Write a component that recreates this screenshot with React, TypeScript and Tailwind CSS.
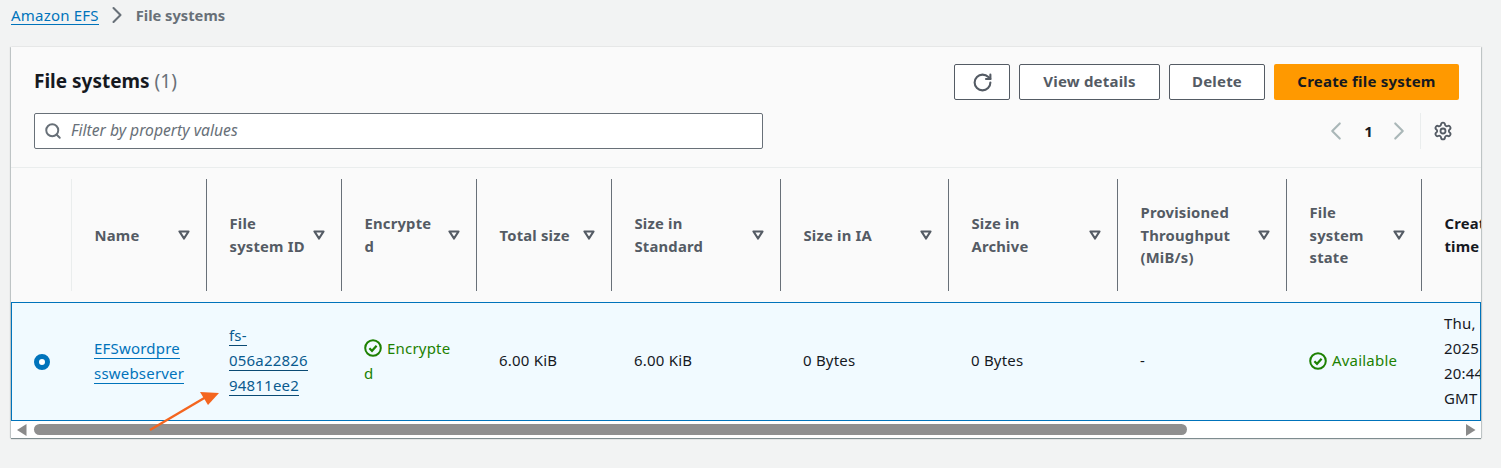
import { RotateCw, Search, ChevronLeft, ChevronRight, Settings } from 'lucide-react';

interface Column {
  label: string[];
  width: string;
  first?: boolean;
}

const columns: Column[] = [
  { label: ['Name'], width: 'w-[135px]', first: true },
  { label: ['File', 'system ID'], width: 'w-[135px]' },
  { label: ['Encrypte', 'd'], width: 'w-[135px]' },
  { label: ['Total size'], width: 'w-[135px]' },
  { label: ['Size in', 'Standard'], width: 'w-[169px]' },
  { label: ['Size in IA'], width: 'w-[168px]' },
  { label: ['Size in', 'Archive'], width: 'w-[169px]' },
  { label: ['Provisioned', 'Throughput', '(MiB/s)'], width: 'w-[169px]' },
  { label: ['File', 'system', 'state'], width: 'w-[135px]' },
];

function SortIcon() {
  return (
    <svg width="12" height="10" viewBox="0 0 12 10" className="shrink-0">
      <path d="M1.500 1.500h9L6 8.500z" fill="none" stroke="#545b64" strokeWidth="2.200" strokeLinejoin="round" />
    </svg>
  );
}

function StatusIcon() {
  return (
    <svg width="18" height="18" viewBox="0 0 18 18" className="shrink-0">
      <circle cx="9" cy="9" r="7.800" fill="none" stroke="#1d8102" strokeWidth="2" />
      <path d="M5.400 9.200l2.600 2.600 4.600-5" fill="none" stroke="#1d8102" strokeWidth="2.200" />
    </svg>
  );
}

function HeaderCell({ column }: { column: Column }) {
  return (
    <div className={`${column.width} shrink-0 h-[112px] flex items-center justify-between pl-[22.500px] pr-[16px] ${column.first ? 'border-l border-[#eaeded]' : 'border-l border-[#687078]'}`}>
      <div className="font-bold text-[14.800px] text-[#545b64] leading-[22.700px]">
        {column.label.map((line) => (
          <div key={line}>{line}</div>
        ))}
      </div>
      <SortIcon />
    </div>
  );
}

function Cell({ width, children }: { width: string; children: React.ReactNode }) {
  return <div className={`${width} shrink-0 pl-[23px] pr-[10px]`}>{children}</div>;
}

function DataLink({ lines, dark, className }: { lines: string[]; dark?: boolean; className?: string }) {
  return (
    <div className={`leading-[25px] ${dark ? 'text-[#0a5a8f]' : 'text-[#0073bb]'} ${className ?? ''}`}>
      {lines.map((line) => (
        <div key={line}>
          <span className={`border-b ${dark ? 'border-[#0a4a74]' : 'border-[#0073bb]'}`}>{line}</span>
        </div>
      ))}
    </div>
  );
}

export default function App() {
  return (
    <div className="h-[468px] overflow-hidden bg-[#f2f3f3] text-[15px] tracking-[0.2px] text-[#16191f] font-['Noto_Sans',sans-serif]">
      <nav className="flex items-center h-[31px] pl-[11px] pb-[1px]">
        <a className="text-[#0073bb] border-b border-[#0073bb] leading-[18px]">Amazon EFS</a>
        <ChevronRight size={28} strokeWidth={1.800} className="text-[#687078] ml-[4px] mr-[5px]" />
        <span className="font-bold text-[14.700px] tracking-normal text-[#687078]">File systems</span>
      </nav>

      <div className="relative ml-[11px] mt-[16px] w-[1470px] h-[391px] bg-white shadow-[0_1px_1px_rgba(0,28,36,0.45),-1px_0_1px_rgba(0,28,36,0.15),1px_0_1px_rgba(0,28,36,0.15)] overflow-hidden">
        <div className="h-[121px] bg-[#fafafa] border-b border-[#eaeded] pl-[23px] pr-[22px] pt-[17px]">
          <div className="flex items-center justify-between h-[36px]">
            <h1 className="text-[19px] tracking-normal font-bold leading-[34px] pb-[2px]">
              File systems <span className="font-normal text-[#687078]">(1)</span>
            </h1>
            <div className="flex items-center font-bold text-[#545b64] leading-[32px]">
              <button className="w-[56px] h-[36px] flex items-center justify-center bg-white border border-[#545b64] rounded-[2px]">
                <RotateCw size={21} strokeWidth={2.400} />
              </button>
              <button className="ml-[9px] w-[141px] h-[36px] bg-white border border-[#545b64] rounded-[2px] pb-[2px]">View details</button>
              <button className="ml-[9px] w-[96px] h-[36px] bg-white border border-[#545b64] rounded-[2px] pb-[2px]">Delete</button>
              <button className="ml-[9px] w-[185px] h-[36px] bg-[#ff9900] text-[#16191f] rounded-[2px] pb-[2px]">Create file system</button>
            </div>
          </div>
          <div className="flex items-center justify-between mt-[13px] h-[36px]">
            <div className="w-[729px] h-[36px] flex items-center bg-white border border-[#687078] rounded-[2px] pl-[9px]">
              <Search size={18} strokeWidth={2.600} className="text-[#687078]" />
              <span className="ml-[9px] italic text-[15.700px] tracking-normal text-[#687078]">Filter by property values</span>
            </div>
            <div className="flex items-center mr-[6px]">
              <ChevronLeft size={30} strokeWidth={1.700} className="text-[#aab7b8]" />
              <span className="ml-[13px] mr-[11px] font-bold">1</span>
              <ChevronRight size={30} strokeWidth={1.700} className="text-[#aab7b8]" />
              <div className="ml-[6px] w-px h-[36px] bg-[#eaeded]" />
              <Settings size={20} strokeWidth={2.200} className="ml-[12px] text-[#545b64]" />
            </div>
          </div>
        </div>

        <div className="flex items-center h-[134px] bg-[#fafafa] pl-[60px] overflow-hidden">
          {columns.map((column) => (
            <HeaderCell key={column.label.join(' ')} column={column} />
          ))}
          <div className="shrink-0 h-[112px] flex items-center border-l border-[#687078] pl-[22.500px] w-[200px] font-bold text-[14.800px] leading-[22.700px]">
            <div>
              <div>Creation</div>
              <div>time</div>
            </div>
          </div>
        </div>

        <div className="flex items-center h-[119px] pb-[2px] bg-[#f1faff] border border-[#0073bb] overflow-hidden">
          <div className="w-[59px] shrink-0 pl-[22px] pt-[2px]">
            <div className="w-[16px] h-[16px] rounded-full bg-white border-[5px] border-[#0073bb]" />
          </div>
          <Cell width="w-[135px]">
            <DataLink lines={['EFSwordpre', 'sswebserver']} />
          </Cell>
          <Cell width="w-[135px]">
            <DataLink lines={['fs-', '056a22826', '94811ee2']} dark />
          </Cell>
          <Cell width="w-[135px]">
            <div className="text-[#1d8102] leading-[25px]">
              <div className="flex items-center gap-[5px]">
                <StatusIcon />
                <span>Encrypte</span>
              </div>
              <div>d</div>
            </div>
          </Cell>
          <Cell width="w-[135px]">6.00 KiB</Cell>
          <Cell width="w-[169px]">6.00 KiB</Cell>
          <Cell width="w-[168px]">0 Bytes</Cell>
          <Cell width="w-[169px]">0 Bytes</Cell>
          <Cell width="w-[169px]">-</Cell>
          <Cell width="w-[135px]">
            <div className="flex items-center gap-[5px] text-[#1d8102]">
              <StatusIcon />
              <span>Available</span>
            </div>
          </Cell>
          <div className="shrink-0 w-[200px] pl-[23px] leading-[25px]">
            <div>Thu, <span className="text-[#ec7211]">0</span></div>
            <div>2025</div>
            <div>20:44</div>
            <div>GMT</div>
          </div>
        </div>

        <div className="flex items-center h-[17px] bg-white px-[6px]">
          <svg width="10" height="12" viewBox="0 0 10 12" className="shrink-0">
            <path d="M9.500 0v12L0 6z" fill="#8a8a8a" />
          </svg>
          <div className="ml-[7px] w-[1153px] h-[11px] rounded-full bg-[#8f8f8f]" />
          <svg width="10" height="12" viewBox="0 0 10 12" className="shrink-0 ml-auto mr-[-1px]">
            <path d="M0 0v12l9.500-6z" fill="#8a8a8a" />
          </svg>
        </div>

        {/* annotation arrow drawn over the table */}
        <svg width="80" height="50" viewBox="0 0 80 50" className="absolute left-[135px] top-[340px]">
          <path d="M4 43L60 10" stroke="#f4651f" strokeWidth="2.400" />
          <path d="M73 6L54 5L62 18z" fill="#f4651f" />
        </svg>
      </div>
    </div>
  );
}
